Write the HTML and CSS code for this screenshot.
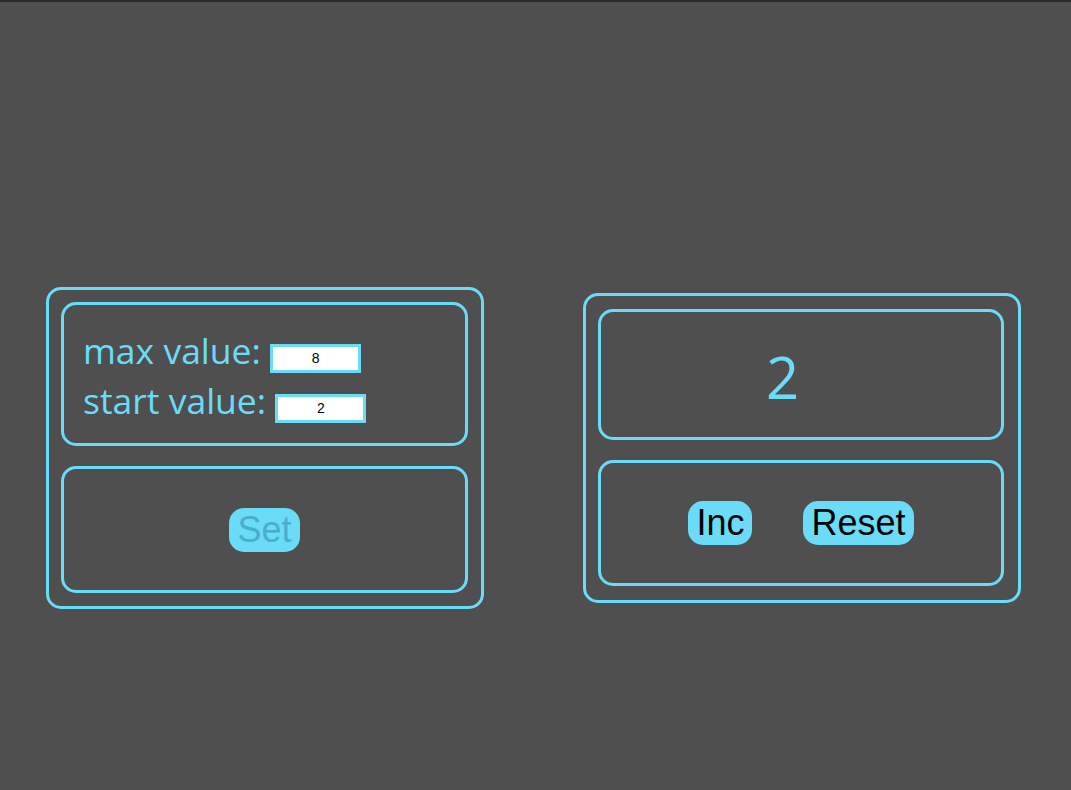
FILE: index.html
```html
<!DOCTYPE html>
<html>
<head>
<meta charset="utf-8">
<link rel="stylesheet" href="styles.css">
</head>
<body>
<div class="topline"></div>
<div class="app">
  <div class="counter settings">
    <div class="panel fields">
      <div class="row"><span class="label">max value:</span> <input class="num num-max" type="text" value="8"></div>
      <div class="row"><span class="label">start value:</span> <input class="num num-start" type="text" value="2"></div>
    </div>
    <div class="panel actions">
      <button class="btn" disabled>Set</button>
    </div>
  </div>
  <div class="counter main">
    <div class="panel display"><span class="value">2</span></div>
    <div class="panel actions wide">
      <button class="btn">Inc</button>
      <button class="btn">Reset</button>
    </div>
  </div>
</div>
</body>
</html>
```
FILE: styles.css
```css
html, body {
  margin: 0;
  padding: 0;
  background: #4f4f4f;
  height: 100%;
}
body {
  font-family: "Open Sans", "Noto Sans", sans-serif;
  color: #6adcf8;
}
.topline {
  height: 2px;
  background: #2b2b2b;
}
.app {
  display: flex;
  justify-content: center;
  align-items: center;
  gap: 99px;
  padding-top: 285px;
  padding-right: 4px;
}
.counter {
  width: 438px;
  box-sizing: border-box;
  border: 3px solid #6adcf8;
  border-radius: 15px;
  padding: 12px 13px 13px 12px;
  display: flex;
  flex-direction: column;
  gap: 20px;
}
.main {
  padding: 13px 14px 14px 12px;
}
.panel {
  border: 3px solid #6adcf8;
  border-radius: 15px;
  box-sizing: border-box;
}
.fields {
  height: 144px;
  padding: 22px 19px 0;
}
.row {
  height: 50px;
  font-size: 35.5px;
  line-height: 46px;
  white-space: nowrap;
}
.num {
  width: 91px;
  height: 29px;
  box-sizing: border-box;
  border: 3px solid #6adcf8;
  background: #fff;
  font-family: "Liberation Sans", Arial, sans-serif;
  font-size: 14px;
  color: #000;
  text-align: center;
  padding: 0;
  vertical-align: 1px;
  outline: none;
}
.actions {
  height: 127px;
  display: flex;
  justify-content: center;
  align-items: center;
}
.wide {
  height: 126px;
  gap: 51px;
}
.display {
  height: 131px;
  display: flex;
  justify-content: center;
  align-items: center;
  padding-right: 37px;
}
.value {
  font-size: 58px;
  line-height: 1;
  margin-top: 4px;
}
.btn {
  font-family: "Liberation Sans", Arial, sans-serif;
  font-size: 36px;
  line-height: 40px;
  padding: 0 6px;
  border: 2px solid #6adcf8;
  background: #6adcf8;
  border-radius: 15px;
  color: #000;
  margin: 0;
}
.btn:disabled {
  color: #4aaecb;
}
```
